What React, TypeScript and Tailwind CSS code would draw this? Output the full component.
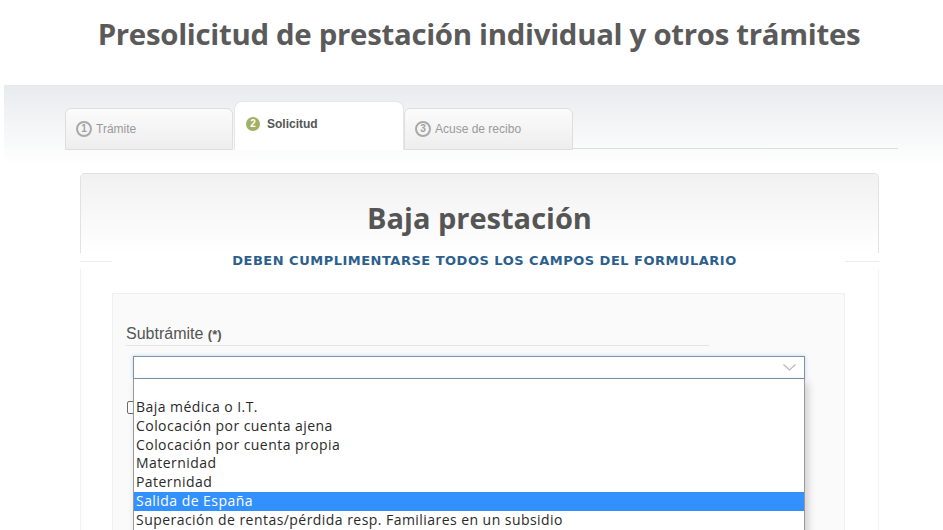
import React from "react";

const OPEN = { fontFamily: '"Open Sans", "Liberation Sans", sans-serif' };
const ARIAL = { fontFamily: '"Liberation Sans", Arial, sans-serif' };

function Circled({ n, active }: { n: number; active?: boolean }) {
  if (active) {
    return (
      <span className="inline-flex h-[14px] w-[14px] items-center justify-center rounded-full bg-[#a2b065] text-[10px] font-bold leading-none text-white">
        {n}
      </span>
    );
  }
  return (
    <span className="inline-flex h-[16px] w-[16px] items-center justify-center rounded-full border-2 border-[#a9a9a9] text-[10px] font-bold leading-none text-[#a0a0a0]">
      {n}
    </span>
  );
}

const options = [
  "Baja médica o I.T.",
  "Colocación por cuenta ajena",
  "Colocación por cuenta propia",
  "Maternidad",
  "Paternidad",
  "Salida de España",
  "Superación de rentas/pérdida resp. Familiares en un subsidio",
];

export default function App() {
  return (
    <div className="relative h-[530px] w-[943px] overflow-hidden bg-white" style={ARIAL}>
      <h1
        className="h-[85px] pl-[15px] pt-[16px] text-center text-[29.4px] font-bold leading-[36px] tracking-[-0.3px] text-[#5a5a5a]"
        style={OPEN}
      >
        Presolicitud de prestación individual y otros trámites
      </h1>

      {/* tab band */}
      <div className="ml-[4px] h-[80px] bg-gradient-to-b from-[#e8ebee] to-white pl-[61px] pr-[45px] pt-[16px]">
        <div className="flex h-[49px] items-end">
          <div className="flex h-[42px] w-[168px] items-start gap-[4px] rounded-t-[6px] border border-[#dedede] bg-gradient-to-b from-[#fbfbfb] to-[#eeeeee] pl-[10px] pt-[12px] text-[12px] text-[#9a9a9a]">
            <Circled n={1} />
            <span className="leading-[16px]">Trámite</span>
          </div>
          <div className="ml-[1px] flex h-[49px] w-[170px] items-start gap-[7px] rounded-t-[8px] border-x border-t border-[#e6e6e6] bg-white pl-[11px] pt-[15px] text-[12px] font-bold text-[#555555]">
            <Circled n={2} active />
            <span className="-mt-[1px] leading-[16px]">Solicitud</span>
          </div>
          <div className="flex h-[42px] w-[169px] items-start gap-[4px] rounded-t-[6px] border border-[#dedede] bg-gradient-to-b from-[#fbfbfb] to-[#eeeeee] pl-[10px] pt-[12px] text-[12px] text-[#9a9a9a]">
            <Circled n={3} />
            <span className="leading-[16px]">Acuse de recibo</span>
          </div>
          <div className="mb-[1px] h-px flex-1 bg-[#dedede]" />
        </div>
      </div>

      {/* card */}
      <div className="ml-[80px] mt-[8px] w-[799px]">
        <div className="h-[80px] rounded-t-[5px] border-x border-t border-[#e2e2e2] bg-gradient-to-b from-[#f1f1f1] to-white pt-[26px]">
          <h2 className="text-center text-[29px] font-bold leading-[36px] text-[#555555]" style={OPEN}>
            Baja prestación
          </h2>
        </div>
        <div className="relative">
          <div className="flex h-[16px] items-center">
            <div className="h-px w-[32px] bg-[#ececec]" />
            <div
              className="flex-1 pl-[12px] text-center text-[13px] font-bold leading-[16px] tracking-[0.5px] text-[#2d5f8e]"
              style={{ fontFamily: '"DejaVu Sans", sans-serif' }}
            >
              DEBEN CUMPLIMENTARSE TODOS LOS CAMPOS DEL FORMULARIO
            </div>
            <div className="h-px w-[34px] bg-[#ececec]" />
          </div>
          <div className="h-[262px] border-x border-[#f2f2f2] pt-[24px]">
            <div className="ml-[31px] h-[300px] w-[733px] border border-[#f0f0f0] bg-[#fafafa] pl-[13px] pt-[31px]">
              <div className="w-[583px] border-b border-[#e4e4e4] pb-[1px] text-[16px] leading-[18px] text-[#555555]">
                Subtrámite <span className="text-[13px] font-bold">(*)</span>
              </div>
              <div className="relative ml-[7px] mt-[10px] w-[672px]">
                <div className="flex h-[23px] items-center justify-end border border-[#7c93ab] bg-white pr-[8px] shadow-[0_0_4px_rgba(120,170,230,0.45)]">
                  <svg width="13" height="7" viewBox="0 0 13 7" fill="none">
                    <path d="M0.5 0.5 L6.5 6 L12.5 0.5" stroke="#b8b8b8" strokeWidth="1.2" />
                  </svg>
                </div>
                {/* open dropdown list */}
                <div
                  className="absolute left-0 top-[23px] z-10 h-[160px] w-[672px] border-x border-[#9a9a9a] bg-white shadow-[3px_3px_8px_rgba(0,0,0,0.18)]"
                  style={OPEN}
                >
                  <div className="h-[19px]" />
                  {options.map((o) => (
                    <div
                      key={o}
                      className={
                        "h-[18.8px] pl-[2px] text-[14px] leading-[18.8px] tracking-[0.45px] " +
                        (o === "Salida de España" ? "bg-[#3390ff] text-white" : "text-[#2a2a2a]")
                      }
                    >
                      {o}
                    </div>
                  ))}
                </div>
              </div>
              <div className="ml-[1px] mt-[22px] h-[13px] w-[13px] rounded-[2px] border border-[#6b6b6b] bg-white" />
            </div>
          </div>
        </div>
      </div>
    </div>
  );
}
